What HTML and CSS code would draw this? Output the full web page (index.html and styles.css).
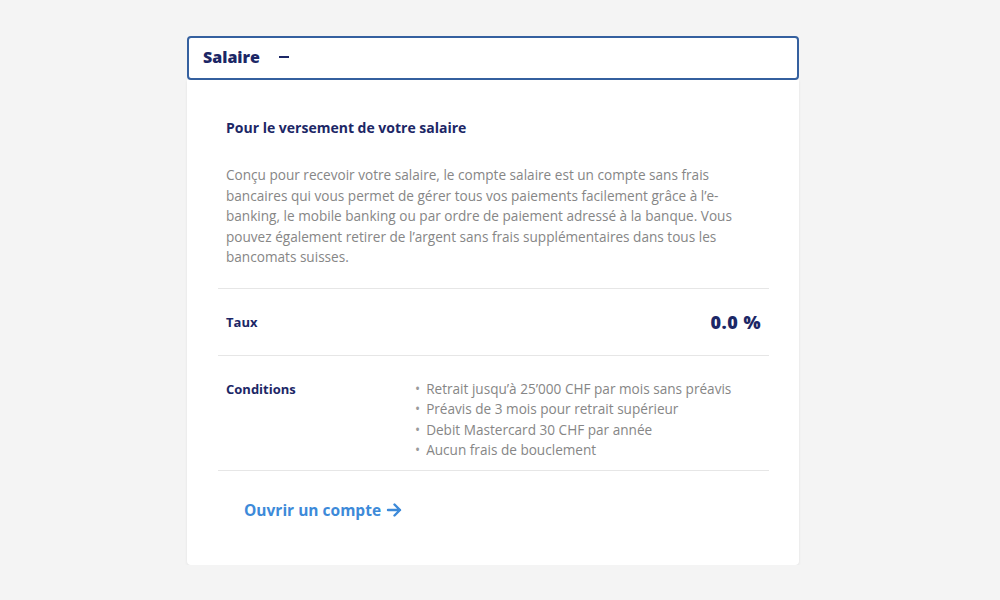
FILE: index.html
```html
<!DOCTYPE html>
<html lang="fr">
<head>
    <meta charset="UTF-8">
    <meta name="viewport" content="width=device-width, initial-scale=1.0">
    <title>Compte salaire</title>
    <link rel="stylesheet" href="styles.css">
</head>
<body>
    <div class="accordion">
        <div class="acc-head">
            <h2>Salaire</h2>
            <span class="acc-toggle"></span>
        </div>

        <div class="acc-body">
            <div class="intro">
                <h3>Pour le versement de votre salaire</h3>
                <p>Conçu pour recevoir votre salaire, le compte salaire est un compte sans frais bancaires qui vous permet de gérer tous vos paiements facilement grâce à l’e-banking, le mobile banking ou par ordre de paiement adressé à la banque. Vous pouvez également retirer de l’argent sans frais supplémentaires dans tous les bancomats suisses.</p>
            </div>

            <div class="row rate-row">
                <span class="row-label">Taux</span>
                <span class="rate">0.0 %</span>
            </div>

            <div class="row cond-row">
                <span class="row-label">Conditions</span>
                <ul class="cond-list">
                    <li>Retrait jusqu’à 25’000 CHF par mois sans préavis</li>
                    <li>Préavis de 3 mois pour retrait supérieur</li>
                    <li>Debit Mastercard 30 CHF par année</li>
                    <li>Aucun frais de bouclement</li>
                </ul>
            </div>

            <a class="open-link" href="#">Ouvrir un compte
                <svg width="16" height="14" viewBox="0 0 16 14" fill="none" stroke="currentColor" stroke-width="2.4" stroke-linecap="round" stroke-linejoin="round">
                    <path d="M2 7h12M8.5 1.5L14 7l-5.5 5.5"/>
                </svg>
            </a>
        </div>
    </div>
</body>
</html>
```

FILE: styles.css
```css
* {
    margin: 0;
    padding: 0;
    box-sizing: border-box;
}

body {
    background-color: #f4f4f4;
    font-family: "Open Sans", "Noto Sans", sans-serif;
}

.accordion {
    width: 612px;
    margin: 36px 0 0 187px;
}

.acc-head {
    height: 44px;
    display: flex;
    align-items: center;
    padding: 0 14px 3px;
    background-color: white;
    border: 2px solid #35609f;
    border-radius: 4px;
}

.acc-head h2 {
    font-size: 16px;
    font-weight: 800;
    color: #1c2766;
}

.acc-toggle {
    width: 10px;
    height: 2px;
    margin-left: 19px;
    background-color: #1c2766;
}

.acc-body {
    background-color: white;
    padding: 0 30px 0 31px;
    border-radius: 0 0 4px 4px;
    box-shadow: 0 1px 3px rgba(0,0,0,0.08);
    height: 485px;
}

.intro {
    padding: 38px 8px 20px;
    border-bottom: 1px solid #e6e6e6;
}

.intro h3 {
    font-size: 14px;
    font-weight: 700;
    color: #1c2766;
    margin-bottom: 28px;
}

.intro p {
    font-size: 13.6px;
    line-height: 20.5px;
    color: #868686;
    padding-right: 4px;
}

.row {
    display: flex;
    padding: 0 8px;
    border-bottom: 1px solid #e6e6e6;
}

.row-label {
    font-size: 13px;
    font-weight: 700;
    color: #1c2766;
}

.rate-row {
    height: 67px;
    align-items: center;
    justify-content: space-between;
}

.rate {
    font-size: 18px;
    font-weight: 800;
    color: #1c2766;
    letter-spacing: 0.5px;
}

.cond-row {
    padding-top: 23px;
    padding-bottom: 9px;
}

.cond-row .row-label {
    width: 189px;
    line-height: 20.5px;
}

.cond-list {
    list-style: none;
}

.cond-list li {
    font-size: 13.6px;
    line-height: 20.5px;
    color: #868686;
}

.cond-list li::before {
    content: "•";
    margin-right: 6px;
    color: #9a9a9a;
}

.open-link {
    display: inline-flex;
    align-items: center;
    gap: 5px;
    margin: 28px 0 0 26px;
    font-size: 15.5px;
    font-weight: 700;
    color: #3d8ad9;
    text-decoration: none;
}
```
